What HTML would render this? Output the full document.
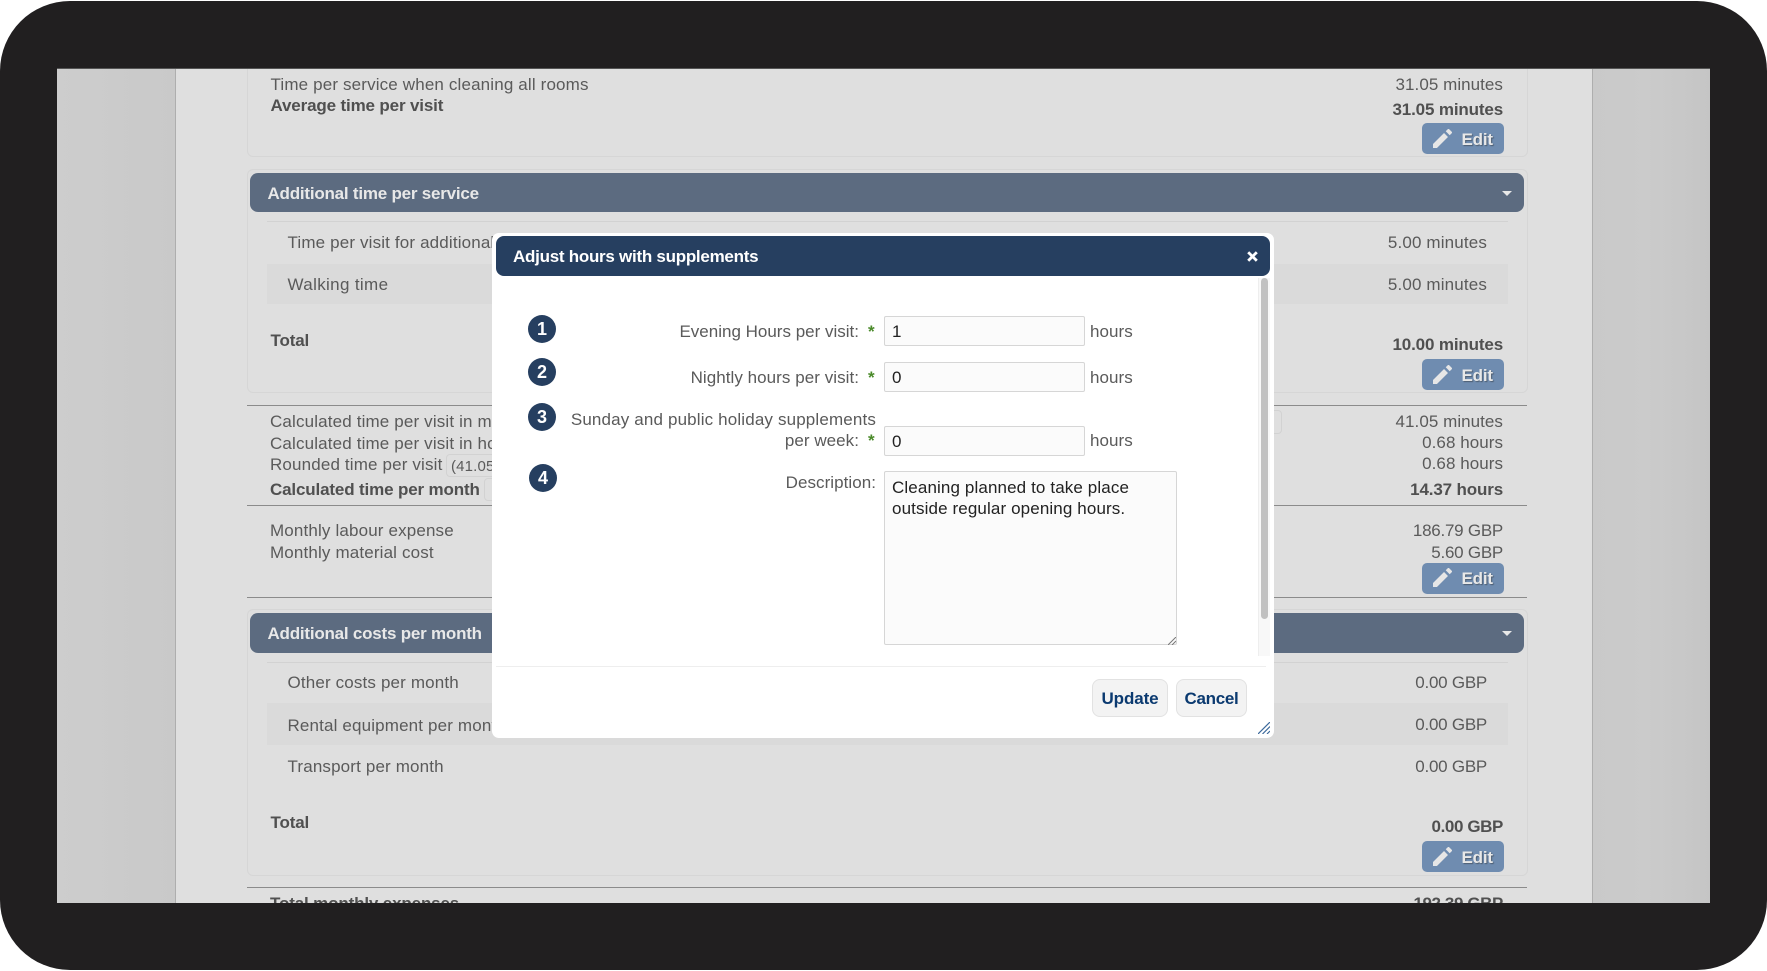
<!DOCTYPE html>
<html lang="en"><head><meta charset="utf-8"><title>Adjust hours with supplements</title>
<style>
html,body{margin:0;padding:0;background:#fff}
body{position:relative;width:1767px;height:971px;overflow:hidden;font-family:"Liberation Sans",sans-serif;font-size:17px;color:#5a5a5a}
#frame{position:absolute;left:0;top:1px;width:1767px;height:969px;background:#211f20;border-radius:70px}
#view{position:absolute;left:57px;top:68px;width:1653px;height:835px;overflow:hidden;background:linear-gradient(90deg,#cdcdcd 0,#c9c9c9 118px,#c9c9c9 1535px,#cbcbcb 1590px,#c5c5c5 1653px);border-top:1px solid #555;box-sizing:border-box}
#abs{position:absolute;left:-57px;top:-69px;width:1767px;height:971px}
#abs div,#abs span.a{position:absolute;box-sizing:border-box}
#pg{left:174.5px;top:0;width:1418.5px;height:971px;background:#dfdfdf;border-left:1.5px solid #aeaeae;border-right:1.5px solid #aeaeae}
.t{white-space:nowrap;line-height:20px;height:20px;letter-spacing:.15px;margin-top:1px}
.t.v{letter-spacing:.05px}
.r{text-align:right}
.b{font-weight:bold;color:#505050;letter-spacing:-.15px}
.g,.t.g{letter-spacing:-.25px}
.panel{border:1px solid #d6d6d6;border-radius:6px;left:247px;width:1281px}
.hd{left:250px;width:1274px;background:#5c6b80;border-radius:8px;color:#e8e8e8;font-weight:bold}
.hd span{position:absolute;left:17.5px;top:10.5px;line-height:20px;white-space:nowrap;letter-spacing:-.22px}
.hd i{position:absolute;left:1252px;width:0;height:0;top:18px;border:5.5px solid transparent;border-top:5.5px solid #e8e8e8;border-bottom:0}
.line{height:1px;background:#8b8b8b;left:247px;width:1280px}
.thin{height:1px;background:#d2d2d2;left:267px;width:1241px}
.st{left:267px;width:1241px;background:#dadada}
.edit{left:1422px;width:81.5px;height:31px;background:#6f8cb0;border-radius:5px;color:#e8e8e8;font-weight:bold;text-shadow:1px 1px 1px #4d5d70}
.edit svg{position:absolute;left:11px;top:5.5px;width:19px;height:19px;fill:#e6e6e6}
.edit span{position:absolute;left:39.5px;top:6.5px;line-height:20px;letter-spacing:-.2px}
.bx{border:1px solid #d2d2d2;border-radius:4px}
#modal{left:492px;top:233px;width:782px;height:505px;background:#fff;border-radius:7px}
#title{left:4px;top:3px;width:773.5px;height:40px;background:#263f60;border-radius:8px;color:#fff;font-weight:bold}
.c{width:28px;height:28px;border-radius:50%;background:#263f60;color:#fff;font-weight:bold;font-size:18px;line-height:28px;text-align:center}
.in{background:#fbfbfb;border:1px solid #d6d6d6;border-radius:2px;color:#222;line-height:20px;padding:5px 7px;letter-spacing:.12px;white-space:nowrap}
.star{color:#4a8a2a;font-weight:bold;line-height:20px;margin-top:1px}
.btn{height:38px;background:#f3f3f3;border:1px solid #e2e2e2;border-radius:8px;color:#0b3a70;font-weight:bold;text-align:center;line-height:38px;letter-spacing:-.1px}
</style></head><body>
<div id="frame"></div>
<div id="view"><div id="abs">
<div id="pg"></div>

<div class="panel" style="top:40px;height:117px"></div>
<div class="t" style="left:270.5px;top:74px">Time per service when cleaning all rooms</div>
<div class="t b" style="left:270.5px;top:95px">Average time per visit</div>
<div class="t r v" style="right:264px;top:74px">31.05 minutes</div>
<div class="t r b" style="right:264px;top:99px">31.05 minutes</div>
<div class="edit" style="top:123px"><svg viewBox="3 3 18 18"><path d="M3 17.25V21h3.75L17.2 10.55l-3.75-3.75L3 17.25zM20.71 7.04a1 1 0 0 0 0-1.41l-2.34-2.34a1 1 0 0 0-1.41 0l-1.9 1.9 3.75 3.75 1.9-1.9z"/></svg><span>Edit</span></div>

<div class="panel" style="top:169px;height:224px"></div>
<div class="hd" style="top:173px;height:39px"><span>Additional time per service</span><i></i></div>
<div class="thin" style="top:221px"></div>
<div class="st" style="top:264px;height:40px"></div>
<div class="t" style="left:287.5px;top:232px">Time per visit for additional services</div>
<div class="t" style="left:287.5px;top:274px;letter-spacing:.35px">Walking time</div>
<div class="t r" style="right:280px;top:232px">5.00 minutes</div>
<div class="t r" style="right:280px;top:274px">5.00 minutes</div>
<div class="t b" style="left:270.5px;top:330px">Total</div>
<div class="t r b" style="right:264px;top:334px">10.00 minutes</div>
<div class="edit" style="top:359px"><svg viewBox="3 3 18 18"><path d="M3 17.25V21h3.75L17.2 10.55l-3.75-3.75L3 17.25zM20.71 7.04a1 1 0 0 0 0-1.41l-2.34-2.34a1 1 0 0 0-1.41 0l-1.9 1.9 3.75 3.75 1.9-1.9z"/></svg><span>Edit</span></div>

<div class="line" style="top:405px"></div>
<div class="bx" style="left:1200px;top:410px;width:82px;height:24px"></div>
<div class="t" style="left:270px;top:411px">Calculated time per visit in minutes</div>
<div class="t" style="left:270px;top:432.5px">Calculated time per visit in hours</div>
<div class="t" style="left:270px;top:454px">Rounded time per visit</div>
<div class="bx" style="left:446px;top:454px;width:100px;height:23px"></div>
<div class="t" style="left:451px;top:456px;font-size:15px">(41.05</div>
<div class="t b" style="left:270px;top:479px">Calculated time per month</div>
<div class="bx" style="left:484px;top:478px;width:60px;height:23px"></div>
<div class="t r v" style="right:264px;top:411px">41.05 minutes</div>
<div class="t r v" style="right:264px;top:432px">0.68 hours</div>
<div class="t r v" style="right:264px;top:453px">0.68 hours</div>
<div class="t r b" style="right:264px;top:478.5px">14.37 hours</div>
<div class="line" style="top:505px"></div>
<div class="t" style="left:270px;top:520px">Monthly labour expense</div>
<div class="t" style="left:270px;top:542px">Monthly material cost</div>
<div class="t r g" style="right:264px;top:520px">186.79 GBP</div>
<div class="t r g" style="right:264px;top:542px">5.60 GBP</div>
<div class="edit" style="top:562.5px"><svg viewBox="3 3 18 18"><path d="M3 17.25V21h3.75L17.2 10.55l-3.75-3.75L3 17.25zM20.71 7.04a1 1 0 0 0 0-1.41l-2.34-2.34a1 1 0 0 0-1.41 0l-1.9 1.9 3.75 3.75 1.9-1.9z"/></svg><span>Edit</span></div>
<div class="line" style="top:597px"></div>

<div class="panel" style="top:609px;height:267px"></div>
<div class="hd" style="top:613px;height:40px"><span>Additional costs per month</span><i></i></div>
<div class="thin" style="top:662px"></div>
<div class="st" style="top:703px;height:42px"></div>
<div class="t" style="left:287.5px;top:672px">Other costs per month</div>
<div class="t" style="left:287.5px;top:714.5px">Rental equipment per month</div>
<div class="t" style="left:287.5px;top:756px">Transport per month</div>
<div class="t r g" style="right:280px;top:672px">0.00 GBP</div>
<div class="t r g" style="right:280px;top:714px">0.00 GBP</div>
<div class="t r g" style="right:280px;top:756px">0.00 GBP</div>
<div class="t b" style="left:270.5px;top:812px">Total</div>
<div class="t r b" style="right:264px;top:816px;letter-spacing:-.4px">0.00 GBP</div>
<div class="edit" style="top:841px"><svg viewBox="3 3 18 18"><path d="M3 17.25V21h3.75L17.2 10.55l-3.75-3.75L3 17.25zM20.71 7.04a1 1 0 0 0 0-1.41l-2.34-2.34a1 1 0 0 0-1.41 0l-1.9 1.9 3.75 3.75 1.9-1.9z"/></svg><span>Edit</span></div>
<div class="line" style="top:887px"></div>
<div class="t b" style="left:270px;top:893px">Total monthly expenses</div>
<div class="t r b" style="right:264px;top:893px;letter-spacing:-.4px">192.39 GBP</div>

<div id="modal">
  <div id="title"><span class="a" style="left:17px;top:10.5px;line-height:20px;white-space:nowrap;letter-spacing:-.27px">Adjust hours with supplements</span>
    <svg style="position:absolute;left:751px;top:15px" width="11" height="11" viewBox="0 0 11 11"><path d="M1.2 1.2L9.8 9.8M9.8 1.2L1.2 9.8" stroke="#fff" stroke-width="2.8"/></svg>
  </div>
  <div style="left:765.5px;top:45px;width:12px;height:378px;background:#f8f8f8;border-left:1px solid #eee"></div>
  <div style="left:768.5px;top:45px;width:7.5px;height:341px;background:#c1c1c1;border-radius:4px"></div>

  <div class="c" style="left:36px;top:82px">1</div>
  <div class="c" style="left:36px;top:125px">2</div>
  <div class="c" style="left:36px;top:170px">3</div>
  <div class="c" style="left:37px;top:231px">4</div>

  <div class="t r v" style="right:415px;top:88px;letter-spacing:0">Evening Hours per visit:</div>
  <div class="star" style="left:376px;top:88px">*</div>
  <div class="in" style="left:392px;top:83px;width:201px;height:30px">1</div>
  <div class="t v" style="left:598px;top:88px">hours</div>

  <div class="t r v" style="right:415px;top:134px">Nightly hours per visit:</div>
  <div class="star" style="left:376px;top:134px">*</div>
  <div class="in" style="left:392px;top:129px;width:201px;height:30px">0</div>
  <div class="t v" style="left:598px;top:134px">hours</div>

  <div class="t r" style="right:398px;top:176px">Sunday and public holiday supplements</div>
  <div class="t r v" style="right:415px;top:197px">per week:</div>
  <div class="star" style="left:376px;top:197px">*</div>
  <div class="in" style="left:392px;top:193px;width:201px;height:30px">0</div>
  <div class="t v" style="left:598px;top:197px">hours</div>

  <div class="t r v" style="right:398px;top:239px">Description:</div>
  <div class="in" style="left:392px;top:238px;width:292.5px;height:174px;line-height:21px;padding:5px 7px">Cleaning planned to take place<br>outside regular opening hours.</div>
  <svg style="position:absolute;left:676px;top:404px" width="8" height="8" viewBox="0 0 8 8"><path d="M0 8L8 0M4 8L8 4" stroke="#777" stroke-width="1"/></svg>

  <div style="left:4px;top:433px;width:770px;height:1px;background:#eee"></div>
  <div class="btn" style="left:600px;top:446px;width:76px">Update</div>
  <div class="btn" style="left:684px;top:446px;width:71px;letter-spacing:-.3px">Cancel</div>
  <svg style="position:absolute;left:766px;top:489px" width="12" height="12" viewBox="0 0 12 12"><path d="M0 12L12 0M4.5 12L12 4.5M9 12L12 9" stroke="#3d6a9c" stroke-width="1.2"/></svg>
</div>
</div></div>
</body></html>
